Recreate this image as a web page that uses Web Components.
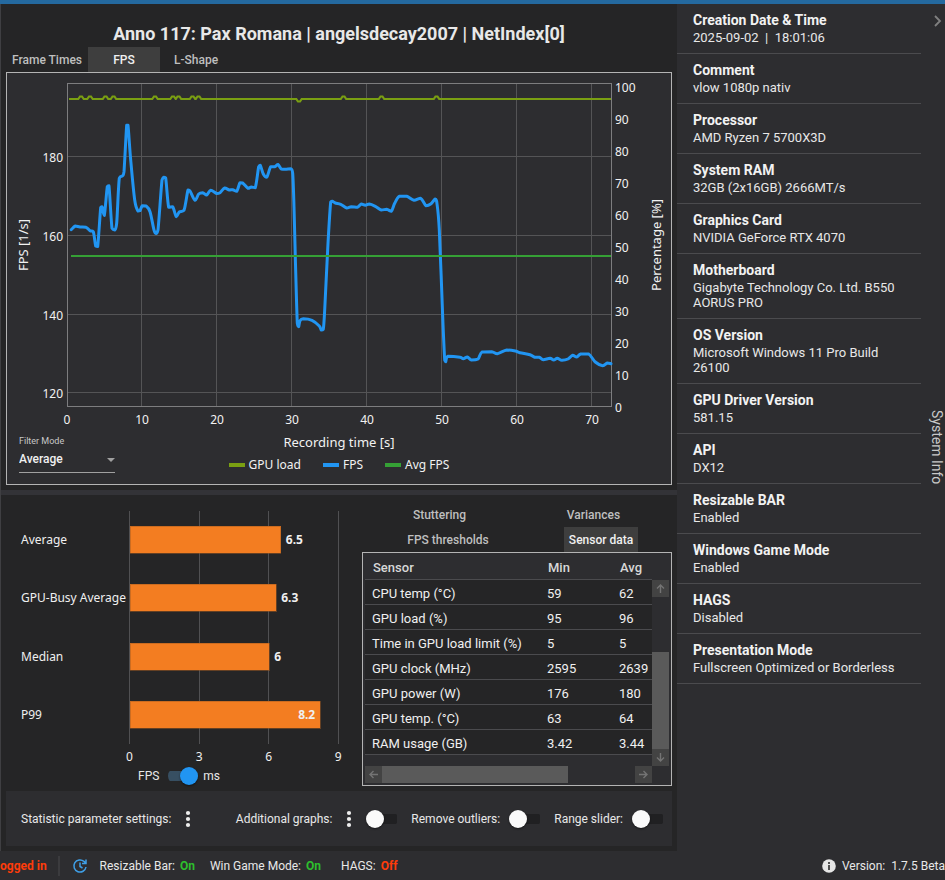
<!DOCTYPE html>
<html lang="en">
<head>
<meta charset="utf-8">
<title>CapFrameX</title>
<style>
    :root {
        --panel: #252526;
        --surface: #2d2d30;
        --line: #4b4b4e;
        --border: #b4b4b4;
        --text: #e8e8e8;
        --muted: #bfbfbf;
        --blue: #2195f2;
        --orange: #f37d21;
        --chart-font: "Noto Sans", "Open Sans", sans-serif;
    }
    body {
        margin: 0;
        background: var(--surface);
        color: var(--text);
        font: 13px/16px Roboto, sans-serif;
    }
</style>
</head>
<body>
<cx-app>
    <cx-comparison slot="main"></cx-comparison>
    <cx-system-info slot="side">
        <cx-info label="Creation Date &amp; Time">2025-09-02 &nbsp;|&nbsp; 18:01:06</cx-info>
        <cx-info label="Comment">vlow 1080p nativ</cx-info>
        <cx-info label="Processor">AMD Ryzen 7 5700X3D</cx-info>
        <cx-info label="System RAM">32GB (2x16GB) 2666MT/s</cx-info>
        <cx-info label="Graphics Card">NVIDIA GeForce RTX 4070</cx-info>
        <cx-info label="Motherboard">Gigabyte Technology Co. Ltd. B550 AORUS PRO</cx-info>
        <cx-info label="OS Version">Microsoft Windows 11 Pro Build 26100</cx-info>
        <cx-info label="GPU Driver Version">581.15</cx-info>
        <cx-info label="API">DX12</cx-info>
        <cx-info label="Resizable BAR">Enabled</cx-info>
        <cx-info label="Windows Game Mode">Enabled</cx-info>
        <cx-info label="HAGS">Disabled</cx-info>
        <cx-info label="Presentation Mode">Fullscreen Optimized or Borderless</cx-info>
    </cx-system-info>
    <cx-status-bar slot="footer"></cx-status-bar>
</cx-app>

<script>
class CxElement extends HTMLElement {
    constructor() {
        super();
        this.attachShadow({ mode: 'open' });
    }

    connectedCallback() {
        this.shadowRoot.innerHTML = this.render();
    }
}

class App extends CxElement {
    render() {
        return `
            <style>
                :host {
                    display: grid;
                    grid-template-columns: minmax(0, 1fr) 268px;
                    border-top: 4px solid #24699f;
                }
                footer { grid-column: 1 / -1; min-width: 0; }
            </style>
            <main><slot name="main"></slot></main>
            <aside><slot name="side"></slot></aside>
            <footer><slot name="footer"></slot></footer>
        `;
    }
}

class Tab extends CxElement {
    render() {
        const active = this.hasAttribute('active');
        return `
            <style>
                :host { display: block; }
                button {
                    width: 100%;
                    height: 25px;
                    padding: 0 5px;
                    border: 0;
                    background: ${active ? '#3e3e3e' : 'none'};
                    color: ${active ? '#f0f0f0' : 'var(--muted)'};
                    font: 500 12px/16px Roboto, sans-serif;
                    white-space: nowrap;
                }
            </style>
            <button type="button" role="tab" aria-selected="${active}"><slot></slot></button>
        `;
    }
}

class Toggle extends CxElement {
    render() {
        const on = this.hasAttribute('on');
        return `
            <style>
                :host { display: block; }
                label {
                    display: flex;
                    align-items: center;
                    gap: 9px;
                    font-size: 12px;
                    white-space: nowrap;
                }
                input {
                    appearance: none;
                    display: flex;
                    align-items: center;
                    flex: none;
                    width: 32px;
                    height: 18px;
                    margin: 0;
                    background: linear-gradient(#202022, #202022) center / 30px 10px no-repeat;
                    border-radius: 9px;
                }
                input::before {
                    content: "";
                    width: 18px;
                    height: 18px;
                    border-radius: 50%;
                    background: #fafafa;
                    box-shadow: 0 1px 2px rgba(0, 0, 0, .5);
                }
                input:checked {
                    width: 30px;
                    justify-content: flex-end;
                    background-image: linear-gradient(#374f62, #374f62);
                }
                input:checked::before { background: var(--blue); }
                ::slotted([slot="after"]) { margin-left: -4px; }
            </style>
            <label>
                <slot></slot>
                <input type="checkbox" ${on ? 'checked' : ''} aria-label="${this.getAttribute('label')}">
                <slot name="after"></slot>
            </label>
        `;
    }
}

class MenuDots extends CxElement {
    render() {
        return `
            <style>
                :host { display: flex; }
                button {
                    display: flex;
                    padding: 0;
                    border: 0;
                    background: none;
                    color: #eee;
                }
            </style>
            <button type="button" aria-label="${this.getAttribute('label')}">
                <svg width="6" height="18" viewBox="0 0 6 18" fill="currentColor">
                    <circle cx="3" cy="3" r="2.1"/><circle cx="3" cy="9" r="2.1"/><circle cx="3" cy="15" r="2.1"/>
                </svg>
            </button>
        `;
    }
}

// plot area: 10 s = 75 units, 20 fps = 79 units, 10 % = 32 units
const FPS_LINE = [
    [71.3, 229.7], [75.3, 226], [80, 227], [86, 227.3], [90, 230.7], [93.3, 231.7], [95.7, 246], [97.7, 246.5],
    [100.7, 207.5], [102, 206.7], [104.3, 215.5], [107.3, 186.5], [109, 185.8], [112, 228.3], [114.7, 230],
    [116.7, 223], [119.3, 178.3], [122.7, 175.7], [124, 171.7], [126.7, 125.2], [128, 125.2], [130.7, 160],
    [134.7, 200], [138, 211], [140, 210.7], [142.3, 205.7], [146, 206], [150, 211.7], [154, 230], [156.2, 233.5],
    [158, 230], [162, 180], [163.7, 177.3], [165.7, 178], [168.7, 207.3], [172.7, 206.7], [176.3, 216.7],
    [179.3, 212], [184, 210.3], [188, 190], [190, 191], [195, 200.3], [198.7, 194], [202.7, 192.7], [206.7, 195],
    [210.7, 190.3], [216.7, 193.5], [220, 192.7], [224.7, 188], [229.3, 190], [232.7, 189.7], [236.7, 191.3],
    [240, 182.7], [242.7, 183], [248, 188.3], [251.3, 187], [255.3, 187.7], [258.7, 166.7], [260.3, 165.3],
    [263.3, 174], [266.7, 177.3], [270.7, 166.7], [274.7, 166.7], [278, 164.5], [281.3, 169], [285.3, 169.3],
    [290.7, 168.7], [292.7, 173.3], [294, 206.7], [295.3, 256.7], [297.3, 323.3], [298.7, 326.7], [300, 320.7],
    [303.3, 318.7], [312, 320.3], [319.3, 326], [321.3, 330], [323.3, 329.3], [324.7, 310], [328, 243.3],
    [330.7, 202], [332.3, 201.2], [335.3, 203], [340.7, 204.3], [346.7, 208], [351.3, 206.7], [357.3, 207.3],
    [361.3, 204], [365.3, 205.3], [369.3, 204], [375.3, 206.3], [381.3, 210], [386.7, 209.3], [391.3, 211.3],
    [394.7, 203.3], [399.3, 196.3], [406.7, 196.3], [414, 200.3], [420.7, 198.3], [426, 205.7], [430.7, 204],
    [435.3, 199], [436.7, 201.7], [439.3, 230], [442.7, 316.7], [444.7, 360], [445.7, 361.7], [448, 356.3],
    [460, 357.3], [463.3, 358.7], [467.3, 357], [471.3, 360], [478, 359], [482, 352], [491.7, 351.7],
    [497.3, 353.7], [506.7, 350], [515.3, 351], [520, 352.7], [530, 354.7], [534.7, 357.3], [539.3, 357.3],
    [543.3, 359.7], [550, 358.3], [553.7, 360], [557.3, 358.3], [562, 360.3], [568, 359], [572.7, 355.3],
    [576.7, 357], [580.7, 354], [588.7, 354], [595.3, 362], [602.7, 365.7], [607.3, 363], [611, 363.7]
];
const LOAD_PEAKS = [81, 90, 105.5, 113.5, 155, 173, 178.5, 192.5, 198.5, 299, 343.5, 381.5, 436.5];

// control points are clamped to the segment, so the curve never overshoots a sample
function smoothPath(points) {
    const clamp = (v, p, q) => Math.max(Math.min(p, q), Math.min(Math.max(p, q), v));
    let d = `M${points[0]}`;
    for (let i = 0; i < points.length - 1; i++) {
        const a = points[i - 1] || points[i];
        const b = points[i];
        const c = points[i + 1];
        const e = points[i + 2] || c;
        const c1 = [0, 1].map(k => clamp(b[k] + (c[k] - a[k]) / 6, b[k], c[k]));
        const c2 = [0, 1].map(k => clamp(c[k] - (e[k] - b[k]) / 6, b[k], c[k]));
        d += `C${c1} ${c2} ${c}`;
    }
    return d;
}

function loadPath() {
    let d = 'M69,99';
    for (const x of LOAD_PEAKS) {
        const peak = x === 299 ? 101.5 : 96.5;
        d += `L${x - 2.7},99 L${x - 1},${peak} L${x + 1},${peak} L${x + 2.7},99`;
    }
    return d + 'L611,99';
}

class FpsChart extends CxElement {
    render() {
        const xs = [0, 1, 2, 3, 4, 5, 6, 7];
        const fps = [[180, 156], [160, 235], [140, 314], [120, 392]];
        const percent = [100, 90, 80, 70, 60, 50, 40, 30, 20, 10, 0];
        return `
            <style>
                :host {
                    display: block;
                    border: 1px solid var(--border);
                    background: var(--surface);
                }
                svg { display: block; width: 100%; }
                svg text { font: 12px var(--chart-font); fill: #f2f2f2; }
                svg .title { font-size: 13px; }
                .grid { stroke: #545456; stroke-width: 1; }
                .footer {
                    display: grid;
                    grid-template-columns: 1fr auto 1fr;
                    padding: 0 12px 11px;
                }
                .filter { display: flex; flex-direction: column; width: 96px; padding-top: 4px; }
                .filter label { font-size: 9px; line-height: 14px; color: #c8c8c8; }
                .field {
                    display: flex;
                    align-items: center;
                    border-bottom: 1px solid #a0a0a0;
                }
                select {
                    appearance: none;
                    flex: 1;
                    min-width: 0;
                    height: 24px;
                    padding: 0 0 2px;
                    border: 0;
                    background: none;
                    color: #f0f0f0;
                    font: 500 12px/16px Roboto, sans-serif;
                }
                .legends {
                    display: flex;
                    flex-direction: column;
                    align-items: center;
                    gap: 7px;
                    padding-top: 4px;
                    font: 12px/16px var(--chart-font);
                    color: #f2f2f2;
                }
                .legends .title { font-size: 13px; }
                ul {
                    display: flex;
                    gap: 22px;
                    margin: 0;
                    padding: 0;
                    list-style: none;
                }
                li { display: flex; align-items: center; gap: 4px; }
                li::before { content: ""; width: 16px; height: 4px; background: var(--c); }
            </style>
            <svg viewBox="7 73 664 357" role="img" aria-label="FPS over recording time">
                <g class="grid" shape-rendering="crispEdges">
                    ${xs.slice(1).map(i => `<path d="M${66.5 + i * 75},84V406"/>`).join('')}
                    ${fps.map(([, y]) => `<path d="M68,${y + .5}H611"/>`).join('')}
                    <rect x="67.5" y="83.5" width="544" height="323" fill="none" stroke="#7d7d7f"/>
                </g>
                <path d="${loadPath()}" fill="none" stroke="#7a9f12" stroke-width="2.2"/>
                <path d="${smoothPath(FPS_LINE)}" fill="none" stroke="#2195f2" stroke-width="3" stroke-linejoin="round" stroke-linecap="round"/>
                <path d="M71,256H611" stroke="#35a035" stroke-width="2"/>
                ${xs.map(i => `<text x="${67 + i * 75}" y="424" text-anchor="middle">${i * 10}</text>`).join('')}
                ${fps.map(([v, y]) => `<text x="63" y="${y + 6}" text-anchor="end">${v}</text>`).join('')}
                ${percent.map((v, i) => `<text x="615" y="${92 + i * 32}">${v}</text>`).join('')}
                <text class="title" transform="translate(28 245) rotate(-90)" text-anchor="middle">FPS [1/s]</text>
                <text class="title" transform="translate(661 245) rotate(-90)" text-anchor="middle">Percentage [%]</text>
            </svg>
            <div class="footer">
                <div class="filter">
                    <label for="mode">Filter Mode</label>
                    <div class="field">
                        <select id="mode"><option>Average</option></select>
                        <svg style="width: 8px" viewBox="0 0 8 4"><path d="M0 0H8L4 4Z" fill="#a0a0a0"/></svg>
                    </div>
                </div>
                <div class="legends">
                    <div class="title">Recording time [s]</div>
                    <ul>
                        <li style="--c: #7a9f12">GPU load</li>
                        <li style="--c: #2195f2">FPS</li>
                        <li style="--c: #35a035">Avg FPS</li>
                    </ul>
                </div>
            </div>
        `;
    }
}

class BarChart extends CxElement {
    render() {
        const bars = [
            ['Average', 6.5, 526], ['GPU-Busy Average', 6.3, 584],
            ['Median', 6, 643], ['P99', 8.2, 701]
        ];
        return `
            <style>
                :host { display: block; }
                svg { display: block; width: 100%; }
                text { font: 12px var(--chart-font); fill: #f0f0f0; }
                rect { fill: var(--orange); stroke: #a65b20; stroke-width: .5; }
                .value { font-weight: 700; }
                .axis { stroke: #505052; }
                .toggle { padding-left: 137px; }
            </style>
            <svg viewBox="1 495 361 272" role="img" aria-label="Frame time statistics in ms">
                <g shape-rendering="crispEdges">
                    ${[0, 3, 6, 9].map(v => `<path class="axis" d="M${Math.round(129 + v * 23.2) + .5},511V744"/>`).join('')}
                    ${bars.map(([, v, y]) => `<rect x="130" y="${y}" width="${v * 23.2}" height="27"/>`).join('')}
                </g>
                ${bars.map(([name, v, y]) => {
                    const end = 130 + v * 23.2;
                    const inside = v > 8;
                    return `<text x="21" y="${y + 18}">${name}</text>
                        <text class="value" x="${inside ? end - 5 : end + 5}" y="${y + 18}" text-anchor="${inside ? 'end' : 'start'}">${v}</text>`;
                }).join('')}
                ${[0, 3, 6, 9].map(v => `<text x="${129.5 + v * 23.2}" y="761" text-anchor="middle">${v}</text>`).join('')}
            </svg>
            <div class="toggle">
                <cx-toggle on label="FPS / ms">FPS<span slot="after">ms</span></cx-toggle>
            </div>
        `;
    }
}

class SensorTable extends CxElement {
    render() {
        const rows = [
            ['CPU temp (°C)', 59, 62],
            ['GPU load (%)', 95, 96],
            ['Time in GPU load limit (%)', 5, 5],
            ['GPU clock (MHz)', 2595, 2639],
            ['GPU power (W)', 176, 180],
            ['GPU temp. (°C)', 63, 64],
            ['RAM usage (GB)', '3.42', '3.44']
        ];
        const arrow = turn => `<svg width="17" height="17" viewBox="0 0 17 17"><path transform="rotate(${turn} 8.5 8.5)" d="M8.5 13V5M5 8.5L8.5 5L12 8.5" fill="none" stroke="#747474" stroke-width="1.4"/></svg>`;
        return `
            <style>
                :host {
                    display: grid;
                    grid-template: 1fr 17px / minmax(0, 1fr) 17px;
                    padding: 0 2px 2px;
                    border: 1px solid var(--border);
                    background: var(--surface);
                }
                .rows { padding-bottom: 11px; overflow: hidden; }
                table { width: 100%; table-layout: fixed; border-collapse: collapse; }
                th, td {
                    height: 21px;
                    padding: 3px 0 0 7px;
                    border-bottom: 1px solid var(--line);
                    text-align: left;
                    font-weight: 400;
                    white-space: nowrap;
                }
                td { background: var(--panel); color: #f0f0f0; }
                thead th { height: 23px; padding-left: 8px; font-weight: 500; color: #d8d8d8; }
                th:nth-child(2) { width: 64px; }
                th:nth-child(3) { width: 32px; }
                .bar { display: flex; background: var(--surface); }
                .bar svg { flex: none; background: #434343; }
                .v { flex-direction: column; margin-top: 27px; }
                .gap-v { flex: 55; }
                .thumb-v { flex: 97; background: #5a5a5a; }
                .thumb-h { flex: 186; background: #5a5a5a; }
                .gap-h { flex: 67; }
            </style>
            <div class="rows">
                <table>
                    <thead><tr><th>Sensor</th><th>Min</th><th>Avg</th></tr></thead>
                    <tbody>${rows.map(r => `<tr>${r.map(c => `<td>${c}</td>`).join('')}</tr>`).join('')}</tbody>
                </table>
            </div>
            <div class="bar v">${arrow(0)}<span class="gap-v"></span><span class="thumb-v"></span>${arrow(180)}</div>
            <div class="bar">${arrow(-90)}<span class="thumb-h"></span><span class="gap-h"></span>${arrow(90)}</div>
        `;
    }
}

class Comparison extends CxElement {
    render() {
        return `
            <style>
                :host {
                    display: block;
                    background: var(--panel);
                    border-left: 1px solid #3f3f42;
                }
                .top { padding: 0 5px 5px; }
                h1 {
                    margin: 0;
                    padding: 19px 0 2px;
                    text-align: center;
                    font-size: 18px;
                    line-height: 22px;
                    font-weight: 700;
                }
                .tabs { display: flex; }
                .tabs cx-tab:nth-child(1) { width: 82px; }
                .tabs cx-tab:nth-child(2), .tabs cx-tab:nth-child(3) { width: 72px; }
                .splitter { height: 5px; background: #333337; }
                .bottom {
                    display: grid;
                    grid-template-columns: 361fr 310fr;
                    padding-right: 5px;
                }
                .sensor { padding-top: 7px; }
                .wrap { display: grid; padding-right: 2px; justify-items: center; }
                .first { grid-template-columns: 155fr 153fr; }
                .second { grid-template-columns: 172fr 134fr; padding-right: 4px; }
                .tools {
                    display: flex;
                    align-items: center;
                    gap: 13px;
                    height: 55px;
                    margin: 5px 5px 0;
                    padding: 0 8px 0 15px;
                    background: var(--surface);
                    font-size: 12px;
                }
                .tools > div { display: flex; align-items: center; gap: 14px; white-space: nowrap; }
                .tools > div:first-child { margin-right: auto; }
                .end { height: 5px; }
            </style>
            <section class="top">
                <h1>Anno 117: Pax Romana | angelsdecay2007 | NetIndex[0]</h1>
                <div class="tabs" role="tablist">
                    <cx-tab>Frame Times</cx-tab><cx-tab active>FPS</cx-tab><cx-tab>L-Shape</cx-tab>
                </div>
                <cx-fps-chart></cx-fps-chart>
            </section>
            <div class="splitter"></div>
            <section class="bottom">
                <cx-bar-chart></cx-bar-chart>
                <div class="sensor">
                    <div class="wrap first" role="tablist"><cx-tab>Stuttering</cx-tab><cx-tab>Variances</cx-tab></div>
                    <div class="wrap second" role="tablist"><cx-tab>FPS thresholds</cx-tab><cx-tab active>Sensor data</cx-tab></div>
                    <cx-sensor-table></cx-sensor-table>
                </div>
            </section>
            <section class="tools">
                <div>Statistic parameter settings: <cx-menu-dots label="Statistic parameters"></cx-menu-dots></div>
                <div>Additional graphs: <cx-menu-dots label="Graphs"></cx-menu-dots><cx-toggle label="Show additional graphs"></cx-toggle></div>
                <cx-toggle label="Remove outliers">Remove outliers:</cx-toggle>
                <cx-toggle label="Range slider">Range slider:</cx-toggle>
            </section>
            <div class="end"></div>
        `;
    }
}

class Info extends CxElement {
    render() {
        return `
            <style>
                :host {
                    display: block;
                    padding: 8px 16px;
                    border-bottom: 1px solid var(--line);
                    line-height: 15px;
                }
                h2 { margin: 0 0 2px; font-size: 14px; line-height: 16px; font-weight: 700; color: #f2f2f2; }
            </style>
            <h2></h2>
            <slot></slot>
        `;
    }

    connectedCallback() {
        super.connectedCallback();
        this.shadowRoot.querySelector('h2').textContent = this.getAttribute('label');
    }
}

class SystemInfo extends CxElement {
    render() {
        return `
            <style>
                :host { display: flex; height: 100%; }
                .list { flex: 1; min-width: 0; }
                .strip {
                    display: flex;
                    flex-direction: column;
                    align-items: flex-end;
                    width: 24px;
                }
                button {
                    height: 34px;
                    padding: 0 3px 0 0;
                    border: 0;
                    background: none;
                }
                button svg { display: block; }
                .name {
                    flex: 1;
                    writing-mode: vertical-rl;
                    text-align: center;
                    font-size: 14px;
                    line-height: 16px;
                    color: #c8c8c8;
                    padding-top: 6px;
                }
            </style>
            <div class="list"><slot></slot></div>
            <div class="strip">
                <button type="button" aria-label="Collapse"><svg width="8" height="12" viewBox="0 0 8 12"><path d="M1 1L6 6L1 11" fill="none" stroke="#808080" stroke-width="1.8"/></svg></button>
                <div class="name">System Info</div>
            </div>
        `;
    }
}

class StatusBar extends CxElement {
    render() {
        return `
            <style>
                :host {
                    display: flex;
                    align-items: center;
                    height: 29px;
                    font-size: 12px;
                    white-space: nowrap;
                }
                b { font-weight: 700; }
                .on { color: #2dbe2d; }
                .off { color: #ff3c0a; }
                hr { width: 2px; height: 20px; margin: 0 12px 0 11px; border: 0; background: #3b3b3e; }
                .flags { display: flex; gap: 15px; margin-left: 12px; }
                .flags span:last-child { margin-left: 5px; }
                .flags b { margin-left: 2px; }
                .version { display: flex; align-items: center; gap: 6px; margin-left: auto; }
            </style>
            <b class="off">ogged in</b>
            <hr>
            <svg width="16" height="16" viewBox="0 0 16 16" fill="none" stroke="#3f9fe6" stroke-width="1.5">
                <path d="M14 9A6.1 6.1 0 1 1 12 3.4L13.3 4.6M14 1.5V5.4H10M8 4.5V8.5L10.5 10"/>
            </svg>
            <div class="flags">
                <span>Resizable Bar: <b class="on">On</b></span>
                <span>Win Game Mode: <b class="on">On</b></span>
                <span>HAGS: <b class="off">Off</b></span>
            </div>
            <div class="version">
                <svg width="14" height="14" viewBox="0 0 14 14"><circle cx="7" cy="7" r="6.8" fill="#e6e6e6"/><path d="M7 3V5M7 6V11" stroke="#505050" stroke-width="2"/></svg>
                <span>Version: &nbsp;1.7.5 Beta</span>
            </div>
        `;
    }
}

customElements.define('cx-app', App);
customElements.define('cx-tab', Tab);
customElements.define('cx-toggle', Toggle);
customElements.define('cx-menu-dots', MenuDots);
customElements.define('cx-fps-chart', FpsChart);
customElements.define('cx-bar-chart', BarChart);
customElements.define('cx-sensor-table', SensorTable);
customElements.define('cx-comparison', Comparison);
customElements.define('cx-info', Info);
customElements.define('cx-system-info', SystemInfo);
customElements.define('cx-status-bar', StatusBar);
</script>
</body>
</html>
